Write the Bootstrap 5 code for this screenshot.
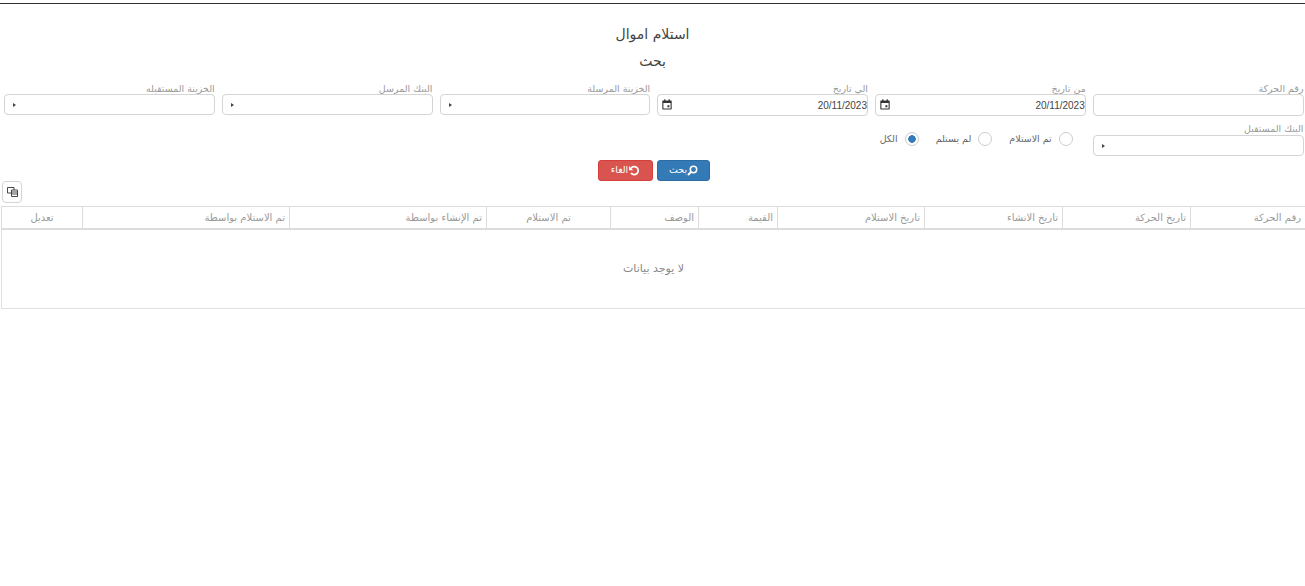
<!DOCTYPE html>
<html lang="ar" dir="rtl">
<head>
    <meta charset="UTF-8">
    <meta name="viewport" content="width=device-width, initial-scale=1.0">
    <title>استلام اموال</title>
    <link href="https://cdn.jsdelivr.net/npm/bootstrap@5.3.3/dist/css/bootstrap.min.css" rel="stylesheet">
    <style>
    body { font-family: "DejaVu Sans", "Noto Sans", sans-serif; font-size: 9px; color: #777; overflow-x: hidden; }
    .top-rule { height: 1px; background: #333; margin-top: 3px; }
    .page-title { font-size: 14px; font-weight: 500; color: #444; text-align: center; margin: 22px 0 0; line-height: 16px; height: 16px; }
    .page-sub { font-size: 14px; font-weight: 500; color: #444; text-align: center; margin: 11px 0 0; line-height: 16px; height: 16px; }
    .filter-wrap { padding: 0 1.5px 0 4px; }
    .filter-row { --bs-gutter-x: 7px; --bs-gutter-y: 0; }
    .field-label { display: block; line-height: 11px; height: 12px; margin: 0; font-size: 9.5px; color: #999; }
    .row-one .field-label { height: 11px; }
    .row-one { margin-top: 14px; height: 33px; }
    .row-two { margin-top: 7px; }
    .field-box { height: 21px; border: 1px solid #d4d4d4; border-radius: 4px; box-shadow: none; padding: 0 0 0 8px; font-size: 10px; color: #444; background-color: #fff; }
    .field-tall { height: 22px; }
    .field-select { background-image: url("data:image/svg+xml,%3Csvg xmlns='http://www.w3.org/2000/svg' width='3' height='4'%3E%3Cpath d='M0 0l3 2-3 2z' fill='%23444'/%3E%3C/svg%3E"); background-repeat: no-repeat; background-position: left 8px center; background-size: 3px 4px; }
    .date-wrap { position: relative; }
    .date-ico { position: absolute; left: 5px; top: 5px; width: 10px; height: 11px; }
    .date-box { direction: ltr; text-align: right; padding: 1px 0 0 0; font-family: "Liberation Sans", sans-serif; }
    .radio-group { display: flex; gap: 17px; margin-top: 8px; padding-right: 13px; align-items: center; height: 16px; }
    .radio-item { display: flex; align-items: center; gap: 7px; font-size: 9.5px; color: #666; }
    .radio-item .form-check-input { width: 14px; height: 14px; margin: 0; border-color: #ccc; float: none; flex: none; }
    .radio-item .form-check-input:checked { background-color: #fff; border-color: #ccc; background-image: radial-gradient(circle, #337ab7 0, #337ab7 3.5px, #fff 4px); }
    .action-row { display: flex; justify-content: center; gap: 4px; margin-top: 4px; height: 21px; padding-left: 3px; }
    .act-btn { display: flex; align-items: center; justify-content: center; height: 21px; padding: 0; font-size: 9.5px; color: #fff; border-radius: 3px; }
    .act-search { width: 53px; background: #337ab7; border: 1px solid #2e6da4; }
    .act-cancel { width: 55px; background: #d9534f; border: 1px solid #d43f3a; }
    .tool-row { padding-left: 2px; }
    .columns-btn { display: flex; align-items: center; justify-content: center; width: 20px; height: 22px; padding: 0; margin: 0 auto 0 0; background: #fff; border: 1px solid #d4d4d4; border-radius: 4px; }
    .grid-wrap { margin: 3px -1px 0 0; }
    .data-grid { width: 1304px; table-layout: fixed; border-collapse: collapse; margin: 0; font-size: 10px; color: #999; }
    .data-grid th { height: 22px; padding: 0 4px; font-weight: 400; text-align: right; border: 1px solid #dcdcdc; border-bottom: 2px solid #dcdcdc; color: #999; }
    .data-grid th.head-mid { text-align: center; }
    .data-grid td { height: 80px; text-align: center; vertical-align: middle; border: 1px solid #e0e0e0; color: #888; font-size: 11px; padding: 0; }
    </style>
</head>
<body>
    <div class="top-rule"></div>
    <h1 class="page-title">استلام اموال</h1>
    <h2 class="page-sub">بحث</h2>

    <!-- الفلاتر -->
    <div class="filter-wrap">
        <div class="row filter-row row-one">
            <div class="col-2">
                <label class="field-label">رقم الحركة</label>
                <input type="text" class="form-control field-box field-tall">
            </div>
            <div class="col-2">
                <label class="field-label">من تاريخ</label>
                <div class="date-wrap">
                    <input type="text" class="form-control field-box field-tall date-box" value="20/11/2023">
                    <svg class="date-ico" viewBox="0 0 10 11"><path d="M1 1.5h8a.7.7 0 0 1 .7.7v7.600a.7.7 0 0 1-.7.7H1a.7.7 0 0 1-.7-.7V2.200a.7.7 0 0 1 .7-.7zM1.400 4v5.400h7.200V4z" fill="#333" fill-rule="evenodd"/><path d="M2.200 .3h1.200v2H2.200zM6.600 .3h1.200v2H6.600zM5.400 6.200h2v2h-2z" fill="#333"/></svg>
                </div>
            </div>
            <div class="col-2">
                <label class="field-label">الي تاريخ</label>
                <div class="date-wrap">
                    <input type="text" class="form-control field-box field-tall date-box" value="20/11/2023">
                    <svg class="date-ico" viewBox="0 0 10 11"><path d="M1 1.5h8a.7.7 0 0 1 .7.7v7.600a.7.7 0 0 1-.7.7H1a.7.7 0 0 1-.7-.7V2.200a.7.7 0 0 1 .7-.7zM1.400 4v5.400h7.200V4z" fill="#333" fill-rule="evenodd"/><path d="M2.200 .3h1.200v2H2.200zM6.600 .3h1.200v2H6.600zM5.400 6.200h2v2h-2z" fill="#333"/></svg>
                </div>
            </div>
            <div class="col-2">
                <label class="field-label">الخزينة المرسلة</label>
                <select class="form-select field-box field-select"></select>
            </div>
            <div class="col-2">
                <label class="field-label">البنك المرسل</label>
                <select class="form-select field-box field-select"></select>
            </div>
            <div class="col-2">
                <label class="field-label">الخزينة المستقبله</label>
                <select class="form-select field-box field-select"></select>
            </div>
        </div>
        <div class="row filter-row row-two">
            <div class="col-2">
                <label class="field-label">البنك المستقبل</label>
                <select class="form-select field-box field-select"></select>
            </div>
            <div class="col-4">
                <div class="radio-group">
                    <label class="radio-item"><input class="form-check-input" type="radio" name="حالة">تم الاستلام</label>
                    <label class="radio-item"><input class="form-check-input" type="radio" name="حالة">لم يستلم</label>
                    <label class="radio-item"><input class="form-check-input" type="radio" name="حالة" checked>الكل</label>
                </div>
            </div>
        </div>
    </div>

    <div class="action-row">
        <button type="button" class="btn act-btn act-search">
            <svg width="11" height="11" viewBox="0 0 11 11"><circle cx="6.500" cy="4.500" r="3.200" fill="none" stroke="#fff" stroke-width="1.500"/><path d="M4.200 6.800 1 10" stroke="#fff" stroke-width="2" fill="none"/></svg>بحث
        </button>
        <button type="button" class="btn act-btn act-cancel">
            <svg width="12" height="11" viewBox="0 0 12 11"><path d="M3 3.200A4 4 0 1 1 3 8" fill="none" stroke="#fff" stroke-width="1.800"/><path d="M1 1v4.200h4.200z" fill="#fff"/></svg>الغاء
        </button>
    </div>

    <div class="tool-row">
        <button type="button" class="columns-btn">
            <svg width="11" height="10" viewBox="0 0 11 10"><path d="M.5.500h6.500v5.500H.5z" fill="#fff" stroke="#333" stroke-width=".9"/><path d="M4.500 3h6v6.500h-6z" fill="#fff" stroke="#333" stroke-width=".9"/><path d="M5 5h5.500M5 7h5.500" stroke="#333" stroke-width=".9"/></svg>
        </button>
    </div>

    <div class="grid-wrap">
        <table class="data-grid">
            <colgroup>
                <col style="width:115px"><col style="width:128px"><col style="width:138px"><col style="width:147px"><col style="width:79px"><col style="width:88px"><col style="width:124px"><col style="width:197px"><col style="width:207px"><col style="width:81px">
            </colgroup>
            <thead>
                <tr>
                    <th>رقم الحركة</th>
                    <th>تاريخ الحركة</th>
                    <th>تاريخ الانشاء</th>
                    <th>تاريخ الاستلام</th>
                    <th>القيمة</th>
                    <th>الوصف</th>
                    <th class="head-mid">تم الاستلام</th>
                    <th>تم الإنشاء بواسطة</th>
                    <th>تم الاستلام بواسطة</th>
                    <th class="head-mid">تعديل</th>
                </tr>
            </thead>
            <tbody>
                <tr><td colspan="10">لا يوجد بيانات</td></tr>
            </tbody>
        </table>
    </div>

    <script src="https://cdn.jsdelivr.net/npm/bootstrap@5.3.3/dist/js/bootstrap.bundle.min.js"></script>
</body>
</html>
